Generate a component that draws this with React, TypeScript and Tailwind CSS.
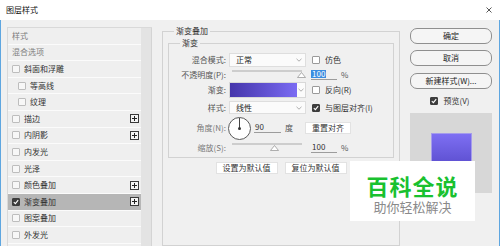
import clsx from "clsx";

type Layer = {
  label: string;
  head?: boolean;
  sub?: boolean;
  plus?: boolean;
  checked?: boolean;
  active?: boolean;
};

const LAYERS: Layer[] = [
  { label: "样式", head: true },
  { label: "混合选项", head: true },
  { label: "斜面和浮雕" },
  { label: "等高线", sub: true },
  { label: "纹理", sub: true },
  { label: "描边", plus: true },
  { label: "内阴影", plus: true },
  { label: "内发光" },
  { label: "光泽" },
  { label: "颜色叠加", plus: true },
  { label: "渐变叠加", plus: true, checked: true, active: true },
  { label: "图案叠加" },
  { label: "外发光" },
  { label: "投影", plus: true },
];

function Check({ checked, light }: { checked?: boolean; light?: boolean }) {
  return (
    <span
      className={clsx(
        "w-[8px] h-[8px] shrink-0 border flex items-center justify-center rounded-[1px]",
        checked ? "bg-[#3d3d3d] border-[#3d3d3d]" : light ? "bg-[#f7f7f7] border-[#bdbdbd]" : "bg-white border-[#9a9a9a]"
      )}
    >
      {checked && (
        <svg width="6" height="6" viewBox="0 0 6 6">
          <path d="M0.8 3.1 2.4 4.6 5.2 1.2" stroke="white" strokeWidth="1.1" fill="none" />
        </svg>
      )}
    </span>
  );
}

function PlusBox() {
  return (
    <span className="ml-auto mr-[2px] w-[9px] h-[9px] border border-[#3a3a3a] flex items-center justify-center bg-[#f4f4f4]">
      <svg width="7" height="7" viewBox="0 0 7 7">
        <path d="M3.5 1v5M1 3.5h5" stroke="#222" strokeWidth="1" />
      </svg>
    </span>
  );
}

function Chevron() {
  return (
    <svg width="6" height="4" viewBox="0 0 6 4">
      <path d="M0.5 0.8 3 3.2 5.5 0.8" stroke="#a5a5a5" strokeWidth="0.9" fill="none" />
    </svg>
  );
}

function Select({ value }: { value: string }) {
  return (
    <div className="ml-[3px] w-[77px] h-full bg-[#fbfbfb] border border-[#dedede] flex items-center pl-[6px] pr-[3px] text-[#222]">
      <span>{value}</span>
      <span className="ml-auto">
        <Chevron />
      </span>
    </div>
  );
}

function Label({ children, dim }: { children: React.ReactNode; dim?: boolean }) {
  return (
    <span className={clsx("w-[57px] shrink-0 text-right whitespace-nowrap", dim ? "text-[#7a7a7a]" : "text-[#555]")}>
      {children}
    </span>
  );
}

function Slider({ thumb }: { thumb: number }) {
  return (
    <div className="ml-[6px] w-[70px] h-full relative flex flex-col">
      <div className="mt-[2px] h-[2px] bg-[#cdcdcd]" />
      <svg
        width="9"
        height="6"
        viewBox="0 0 9 6"
        className="absolute top-[4px]"
        style={{ left: thumb - 4 }}
      >
        <path d="M4.5 0.5 8.5 5.5H0.5Z" fill="#fff" stroke="#9a9a9a" strokeWidth="0.8" />
      </svg>
    </div>
  );
}

function Field({ value, selected, width = 26 }: { value: string; selected?: boolean; width?: number }) {
  return (
    <span className="border-b border-[#9c9c9c] pb-[1px] flex" style={{ width }}>
      <span className={clsx("px-[1px]", selected ? "bg-[#3b8de0] text-white" : "text-[#333]")}>{value}</span>
    </span>
  );
}

function Btn({ children, w }: { children: React.ReactNode; w: string }) {
  return (
    <div className={clsx(w, "h-[12px] bg-white border border-[#e2e2e2] flex items-center justify-center text-[#333]")}>
      {children}
    </div>
  );
}

function RoundBtn({ children }: { children: React.ReactNode }) {
  return (
    <div className="w-[82px] h-[16px] rounded-[7px] border border-[#8f8f8f] bg-[#f5f5f5] flex items-center justify-center text-[#222]">
      {children}
    </div>
  );
}

export default function App() {
  return (
    <div className="relative w-[500px] h-[246px] overflow-hidden bg-[#f0f0f0] font-['Noto_Sans_CJK_SC',sans-serif] text-[8px] leading-none text-[#333]">
      {/* title bar */}
      <div className="h-[20px] bg-white flex items-center pl-[6px] pr-[8px]">
        <span className="text-[8px] text-[#111]">图层样式</span>
        <svg className="ml-auto" width="6" height="6" viewBox="0 0 6 6">
          <path d="M0.5 0.5 5.5 5.5M5.5 0.5 0.5 5.5" stroke="#444" strokeWidth="0.9" />
        </svg>
      </div>

      <div className="flex h-[226px] border-x border-[#5ea6e0]">
        {/* layer list */}
        <div className="ml-[6px] mt-[7px] flex border-t border-l border-[#d9d9d9] h-[230px]">
          <div className="w-[133px] flex flex-col">
            {LAYERS.map((l) => (
              <div
                key={l.label}
                className={clsx(
                  "h-[16.6px] shrink-0 border-b border-[#fbfbfb] flex items-center gap-[4px]",
                  l.active ? "bg-[#b6b6b6]" : "bg-[#efefef]",
                  l.sub ? "pl-[10px]" : "pl-[4px]"
                )}
              >
                {!l.head && <Check checked={l.checked} light />}
                <span className={l.head ? "text-[#7d7d7d]" : "text-[#333]"}>{l.label}</span>
                {l.plus && <PlusBox />}
              </div>
            ))}
          </div>
          <div className="w-[11px] bg-[#e3e3e3] border-r border-[#d4d4d4]" />
        </div>

        {/* gradient overlay settings */}
        <div className="ml-[10px] flex flex-col">
          <fieldset className="mt-[5px] w-[238px] border border-[#d2d2d2] px-[5px] h-[240px]">
            <legend className="ml-[6px] px-[2px] leading-[12px] text-[#333]">渐变叠加</legend>
            <fieldset className="border border-[#d2d2d2] pt-[4px] pb-[3px]">
              <legend className="ml-[11px] px-[2px] leading-[12px] text-[#333]">渐变</legend>

              <div className="flex items-center h-[14px]">
                <Label>混合模式:</Label>
                <Select value="正常" />
                <span className="ml-[6px] flex items-center gap-[5px]">
                  <Check />
                  <span>仿色</span>
                </span>
              </div>

              <div className="mt-[1px] flex items-center h-[13px]">
                <Label>不透明度(P):</Label>
                <Slider thumb={69} />
                <span className="ml-[9px] flex items-center gap-[4px]">
                  <Field value="100" selected />
                  <span className="text-[#555]">%</span>
                </span>
              </div>

              <div className="mt-[1px] flex items-center h-[16px]">
                <Label>渐变:</Label>
                <div className="ml-[3px] w-[77px] h-full flex border border-[#d8d8d8] bg-[#fbfbfb]">
                  <div className="w-[67px] h-full bg-linear-to-r from-[#4535ab] to-[#7b6bf3]" />
                  <div className="flex-1 flex items-center justify-center">
                    <Chevron />
                  </div>
                </div>
                <span className="ml-[6px] flex items-center gap-[5px]">
                  <Check />
                  <span>反向(R)</span>
                </span>
              </div>

              <div className="mt-[3px] flex items-center h-[13px]">
                <Label>样式:</Label>
                <Select value="线性" />
                <span className="ml-[6px] flex items-center gap-[5px]">
                  <Check checked />
                  <span>与图层对齐(I)</span>
                </span>
              </div>

              <div className="mt-[2px] flex items-center h-[24px]">
                <Label dim>角度(N):</Label>
                <div className="ml-[2px] w-[23px] h-[23px] rounded-full border border-[#5a5a5a] bg-white flex flex-col items-center">
                  <div className="w-px h-[10px] bg-[#444]" />
                  <div className="-mt-px w-[3px] h-[3px] rounded-full bg-[#333]" />
                </div>
                <span className="ml-[3px] flex items-center gap-[4px]">
                  <Field value="90" width={27} />
                  <span className="text-[#555]">度</span>
                </span>
                <div className="ml-[12px]">
                  <Btn w="w-[46px]">重置对齐</Btn>
                </div>
              </div>

              <div className="mt-[1px] flex items-center h-[13px]">
                <Label dim>缩放(S):</Label>
                <Slider thumb={42} />
                <span className="ml-[9px] flex items-center gap-[4px]">
                  <Field value="100" />
                  <span className="text-[#555]">%</span>
                </span>
              </div>
            </fieldset>

            <div className="mt-[4px] flex justify-center gap-[7px]">
              <Btn w="w-[62px]">设置为默认值</Btn>
              <Btn w="w-[62px]">复位为默认值</Btn>
            </div>
          </fieldset>
        </div>

        {/* buttons + preview */}
        <div className="ml-[10px] mt-[8px] flex flex-col">
          <RoundBtn>确定</RoundBtn>
          <div className="mt-[6px]">
            <RoundBtn>取消</RoundBtn>
          </div>
          <div className="mt-[7px]">
            <RoundBtn>新建样式(W)...</RoundBtn>
          </div>
          <div className="mt-[8px] flex items-center justify-center gap-[5px] pr-[2px]">
            <Check checked />
            <span>预览(V)</span>
          </div>
          <div className="mt-[8px] w-[82px] h-[80px] bg-[#d7d7d7] flex justify-center pt-[20px]">
            <div className="w-[41px] h-[41px] border border-[#a59cec] bg-linear-to-b from-[#7e6ff3] to-[#5446c6]" />
          </div>
        </div>
      </div>

      {/* watermark */}
      <div className="absolute left-[350px] top-[161px] w-[125px] h-[60px] bg-white flex flex-col items-center pt-[13px]">
        <span className="text-[22px] leading-[22px] font-bold tracking-[1px] text-[#19c12f]">百科全说</span>
        <span className="mt-[4px] text-[13px] leading-[13px] text-[#8a8a8a]">助你轻松解决</span>
      </div>
    </div>
  );
}
